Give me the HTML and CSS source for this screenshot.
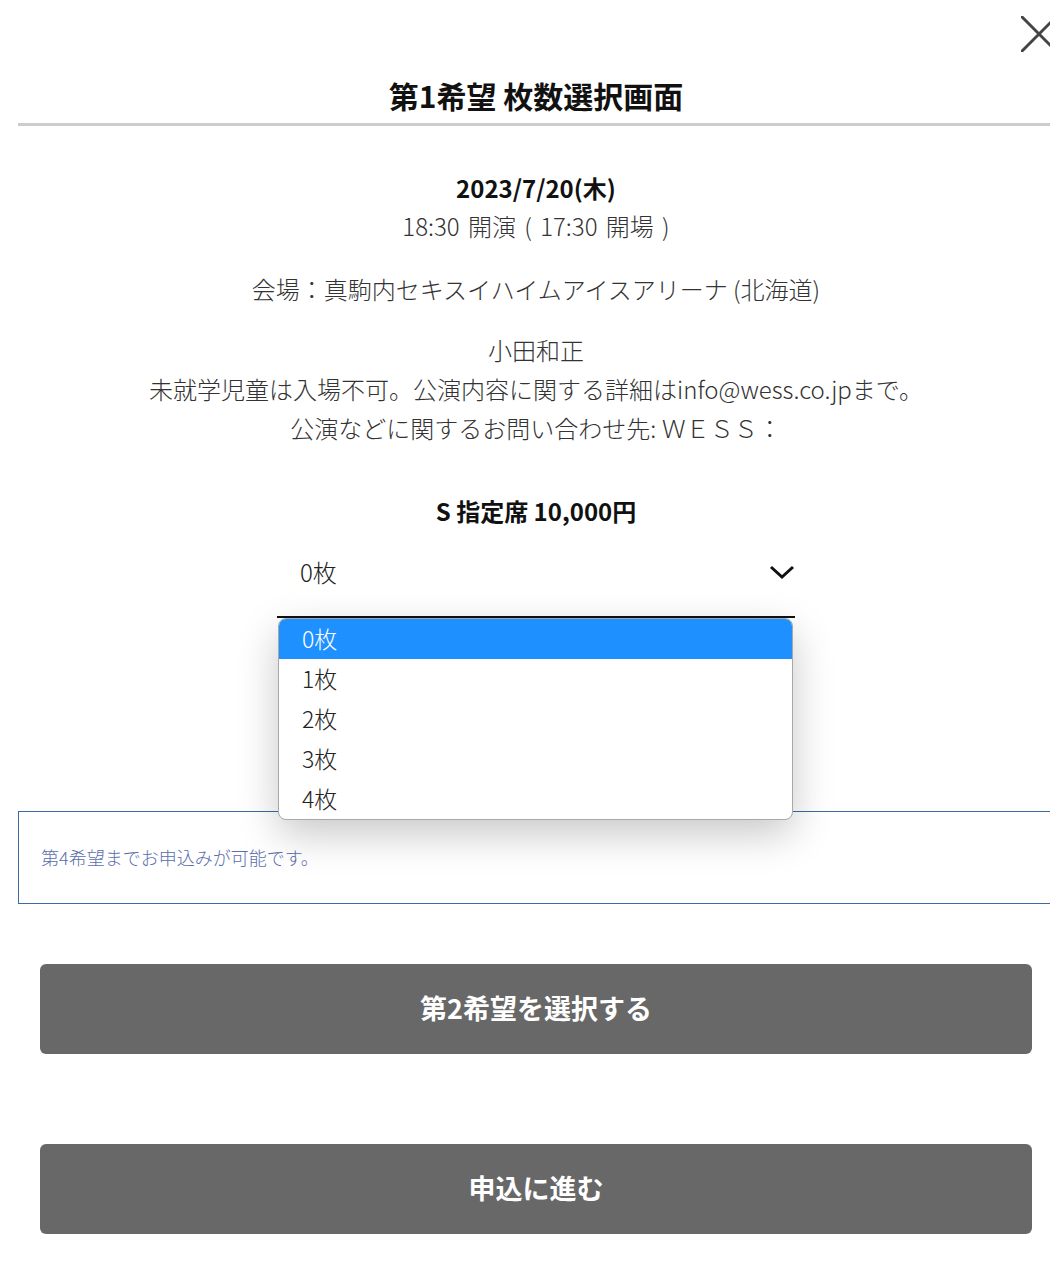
FILE: index.html
```html
<!DOCTYPE html>
<html lang="ja">
<head>
<meta charset="utf-8">
<title>第1希望 枚数選択画面</title>
<link rel="stylesheet" href="styles.css">
</head>
<body>
<div class="modal">
  <button class="close" aria-label="閉じる">
    <svg width="36" height="36" viewBox="0 0 36 36"><path d="M1 1 L35 35 M35 1 L1 35" stroke="#444" stroke-width="3" fill="none" stroke-linecap="round"/></svg>
  </button>
  <header class="modal-header">
    <h1 class="title">第1希望 枚数選択画面</h1>
  </header>
  <section class="info">
    <p class="date"><strong>2023/7/20(木)</strong><br><span class="time">18:30 開演 ( 17:30 開場 )</span></p>
    <p class="venue">会場：真駒内セキスイハイムアイスアリーナ (北海道)</p>
    <p class="notes">小田和正<br>未就学児童は入場不可。公演内容に関する詳細はinfo@wess.co.jpまで。<br>公演などに関するお問い合わせ先: ＷＥＳＳ：</p>
    <p class="seat">S 指定席 10,000円</p>
    <div class="select-wrap">
      <div class="select">
        <span class="select-value">0枚</span>
        <svg class="chevron" width="26" height="16" viewBox="0 0 26 16"><path d="M2 3 L13 13 L24 3" stroke="#111" stroke-width="3" fill="none"/></svg>
      </div>
      <ul class="dropdown">
        <li class="option selected">0枚</li>
        <li class="option">1枚</li>
        <li class="option">2枚</li>
        <li class="option">3枚</li>
        <li class="option">4枚</li>
      </ul>
    </div>
  </section>
  <div class="notice">第4希望までお申込みが可能です。</div>
  <div class="actions">
    <button class="btn">第2希望を選択する</button>
    <button class="btn btn-second">申込に進む</button>
  </div>
</div>
</body>
</html>
```
FILE: styles.css
```css
html, body {
  margin: 0;
  padding: 0;
  background: #fff;
  overflow: hidden;
}
body {
  font-family: "Noto Sans CJK JP", "Noto Sans", sans-serif;
  color: #333;
}
.modal {
  position: relative;
  margin-left: 18px;
  width: 1036px;
}
.close {
  position: absolute;
  top: 16px;
  left: 1003px;
  width: 36px;
  height: 36px;
  padding: 0;
  border: 0;
  background: none;
}
.close svg { display: block; }
.modal-header {
  padding-top: 73px;
  padding-bottom: 6px;
  border-bottom: 3px solid #cccccc;
}
.title {
  margin: 0;
  text-align: center;
  font-size: 30px;
  line-height: 44px;
  font-weight: 700;
  color: #111;
}
.info {
  text-align: center;
  font-size: 24px;
  font-weight: 300;
}
.info p { margin: 0; }
.date {
  padding-top: 43px;
  line-height: 38px;
}
.date strong {
  font-weight: 700;
  color: #111;
}
.time { word-spacing: 3px; }
.venue {
  margin-top: 25px !important;
  line-height: 38px;
}
.notes {
  margin-top: 22px !important;
  line-height: 39px;
}
.seat {
  margin-top: 45px !important;
  line-height: 38px;
  font-weight: 700;
  color: #111;
}
.select-wrap {
  position: relative;
  width: 518px;
  margin: 0 auto;
}
.select {
  display: flex;
  align-items: center;
  justify-content: space-between;
  height: 86px;
  padding: 0 0 0 23px;
  border-bottom: 2px solid #111;
  color: #222;
}
.select-value { line-height: 1; margin-top: -3px; }
.chevron { display: block; margin-top: -3px; }
.dropdown {
  position: absolute;
  left: 1px;
  top: 100%;
  width: 513px;
  margin: 0;
  padding: 0;
  list-style: none;
  background: #fff;
  border: 1px solid #a8a8a8;
  border-radius: 8px;
  overflow: hidden;
  box-shadow: 0 14px 40px rgba(0, 0, 0, 0.22);
  z-index: 5;
  text-align: left;
}
.option {
  height: 40px;
  line-height: 38px;
  padding-left: 23px;
  font-size: 23px;
  color: #222;
}
.option.selected {
  background: #1e90ff;
  color: #fff;
}
.notice {
  margin-top: 193px;
  height: 89px;
  padding-left: 22px;
  padding-bottom: 2px;
  display: flex;
  align-items: center;
  border: 1px solid #3c6aa6;
  font-size: 18px;
  font-weight: 300;
  color: #5a6eab;
}
.actions {
  display: flex;
  flex-direction: column;
  gap: 90px;
  padding: 60px 22px 0;
}
.btn {
  height: 90px;
  padding: 0 0 4px;
  border: 0;
  border-radius: 6px;
  background: #686868;
  color: #fff;
  font-family: "Noto Sans CJK JP", "Noto Sans", sans-serif;
  font-size: 27px;
  font-weight: 700;
}
```
